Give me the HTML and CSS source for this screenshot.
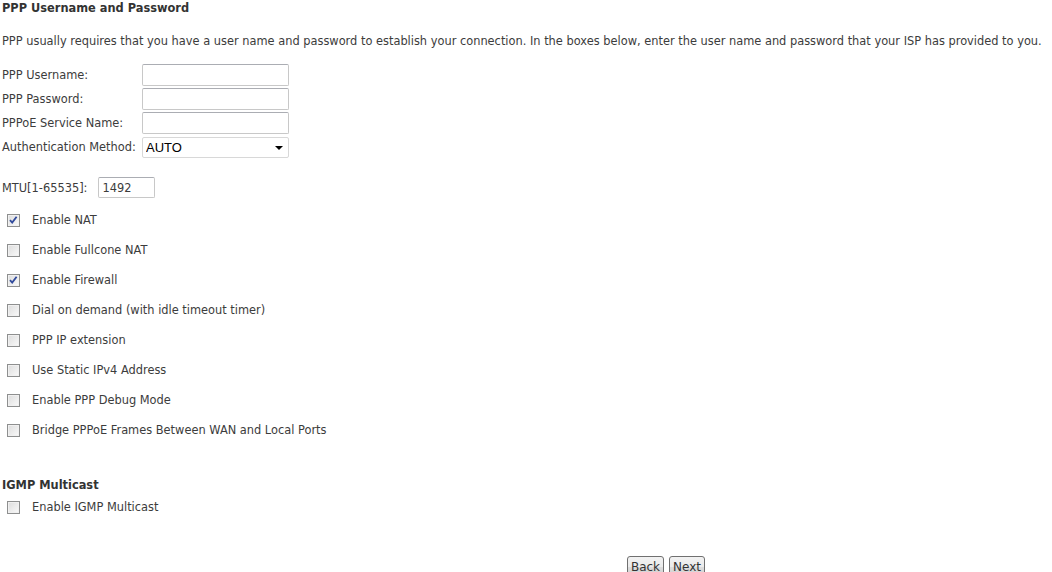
FILE: index.html
```html
<!DOCTYPE html>
<html lang="en">
<head>
    <meta charset="UTF-8">
    <title>WAN Setup - PPP</title>
    <link rel="stylesheet" href="styles.css">
</head>
<body>
    <div class="page">
        <h4 class="section-title">PPP Username and Password</h4>
        <p class="intro">PPP usually requires that you have a user name and password to establish your connection. In the boxes below, enter the user name and password that your ISP has provided to you.</p>

        <div class="auth-grid">
            <label for="pppUserName">PPP Username:</label>
            <input type="text" id="pppUserName" class="text-box">
            <label for="pppPassword">PPP Password:</label>
            <input type="password" id="pppPassword" class="text-box">
            <label for="pppServerName">PPPoE Service Name:</label>
            <input type="text" id="pppServerName" class="text-box">
            <label for="pppAuthMethod">Authentication Method:</label>
            <div class="select-box">
                <select id="pppAuthMethod">
                    <option>AUTO</option>
                    <option>PAP</option>
                    <option>CHAP</option>
                    <option>MSCHAP</option>
                </select>
                <span class="select-arrow"></span>
            </div>
        </div>

        <div class="mtu-row">
            <label for="pppMtu">MTU[1-65535]:</label>
            <input type="text" id="pppMtu" class="text-box mtu-box" value="1492">
        </div>

        <div class="options">
            <label class="option"><input type="checkbox" checked><span>Enable NAT</span></label>
            <label class="option"><input type="checkbox"><span>Enable Fullcone NAT</span></label>
            <label class="option"><input type="checkbox" checked><span>Enable Firewall</span></label>
            <label class="option"><input type="checkbox"><span>Dial on demand (with idle timeout timer)</span></label>
            <label class="option"><input type="checkbox"><span>PPP IP extension</span></label>
            <label class="option"><input type="checkbox"><span>Use Static IPv4 Address</span></label>
            <label class="option"><input type="checkbox"><span>Enable PPP Debug Mode</span></label>
            <label class="option"><input type="checkbox"><span>Bridge PPPoE Frames Between WAN and Local Ports</span></label>
        </div>

        <h4 class="section-title igmp-title">IGMP Multicast</h4>
        <div class="options igmp-options">
            <label class="option"><input type="checkbox"><span>Enable IGMP Multicast</span></label>
        </div>

        <div class="buttons">
            <button type="button">Back</button>
            <button type="button">Next</button>
        </div>
    </div>
</body>
</html>
```

FILE: styles.css
```css
body {
    margin: 0;
    background: #fff;
    font-family: "DejaVu Sans", Verdana, sans-serif;
    font-size: 11.4px;
    color: #3c3c3c;
}
.page {
    padding: 0 2px;
}
.section-title {
    margin: 0;
    padding-top: 1px;
    font-size: 11.4px;
    line-height: 14px;
    font-weight: bold;
    color: #333;
}
.intro {
    margin: 19px 0 0;
    line-height: 14px;
    white-space: nowrap;
}
.auth-grid {
    display: grid;
    grid-template-columns: 140px 147px;
    row-gap: 2px;
    margin-top: 16px;
    align-items: center;
}
.auth-grid label {
    line-height: 22px;
}
.text-box {
    box-sizing: border-box;
    width: 147px;
    height: 22px;
    margin: 0;
    padding: 1px 3px;
    border: 1px solid #c8c8c8;
    border-top-color: #abadb3;
    border-radius: 2px;
    font-family: "DejaVu Sans", Verdana, sans-serif;
    font-size: 11.4px;
    color: #3c3c3c;
    outline: none;
}
.select-box {
    position: relative;
    width: 147px;
    height: 21px;
}
.select-box select {
    -webkit-appearance: none;
    appearance: none;
    box-sizing: border-box;
    width: 147px;
    height: 21px;
    margin: 0;
    padding: 0 3px;
    border: 1px solid #d8d8d8;
    border-radius: 2px;
    background: #fff;
    font-family: "Liberation Sans", Arial, sans-serif;
    font-size: 13px;
    color: #000;
    outline: none;
}
.select-arrow {
    position: absolute;
    right: 6px;
    top: 9px;
    width: 0;
    height: 0;
    border-left: 4px solid transparent;
    border-right: 4px solid transparent;
    border-top: 4px solid #000;
    pointer-events: none;
}
.mtu-row {
    display: flex;
    align-items: center;
    gap: 11px;
    margin-top: 19px;
}
.mtu-box {
    width: 57px;
    height: 21px;
}
.options {
    margin-top: 7px;
}
.option {
    display: flex;
    align-items: center;
    height: 30px;
}
.option input {
    -webkit-appearance: none;
    appearance: none;
    box-sizing: border-box;
    width: 13px;
    height: 13px;
    margin: 0 12px 0 5px;
    border: 1px solid #8e8f8f;
    background: linear-gradient(135deg, #dcdcdc 0%, #f4f4f4 80%, #fbfbfb 100%);
    box-shadow: inset 0 0 0 1px #f0f0f0;
}
.option input:checked {
    background: url("data:image/svg+xml;utf8,<svg xmlns='http://www.w3.org/2000/svg' width='11' height='11' viewBox='0 0 11 11'><path d='M2 5.2 L4.2 7.6 L8.6 1.8' fill='none' stroke='%23304a9c' stroke-width='1.8'/></svg>") center no-repeat,
        linear-gradient(135deg, #dcdcdc 0%, #f4f4f4 80%, #fbfbfb 100%);
}
.igmp-title {
    margin-top: 32px;
}
.igmp-options {
    margin-top: 0;
}
.buttons {
    display: flex;
    justify-content: center;
    gap: 5px;
    margin-top: 34px;
    padding-left: 280px;
}
.buttons button {
    height: 21px;
    padding: 0 3px;
    border: 1px solid #707070;
    border-radius: 3px;
    background: linear-gradient(#f2f2f2 0%, #ebebeb 50%, #dddddd 51%, #cfcfcf 100%);
    font-family: "DejaVu Sans", Verdana, sans-serif;
    font-size: 12px;
    color: #333;
}
```
